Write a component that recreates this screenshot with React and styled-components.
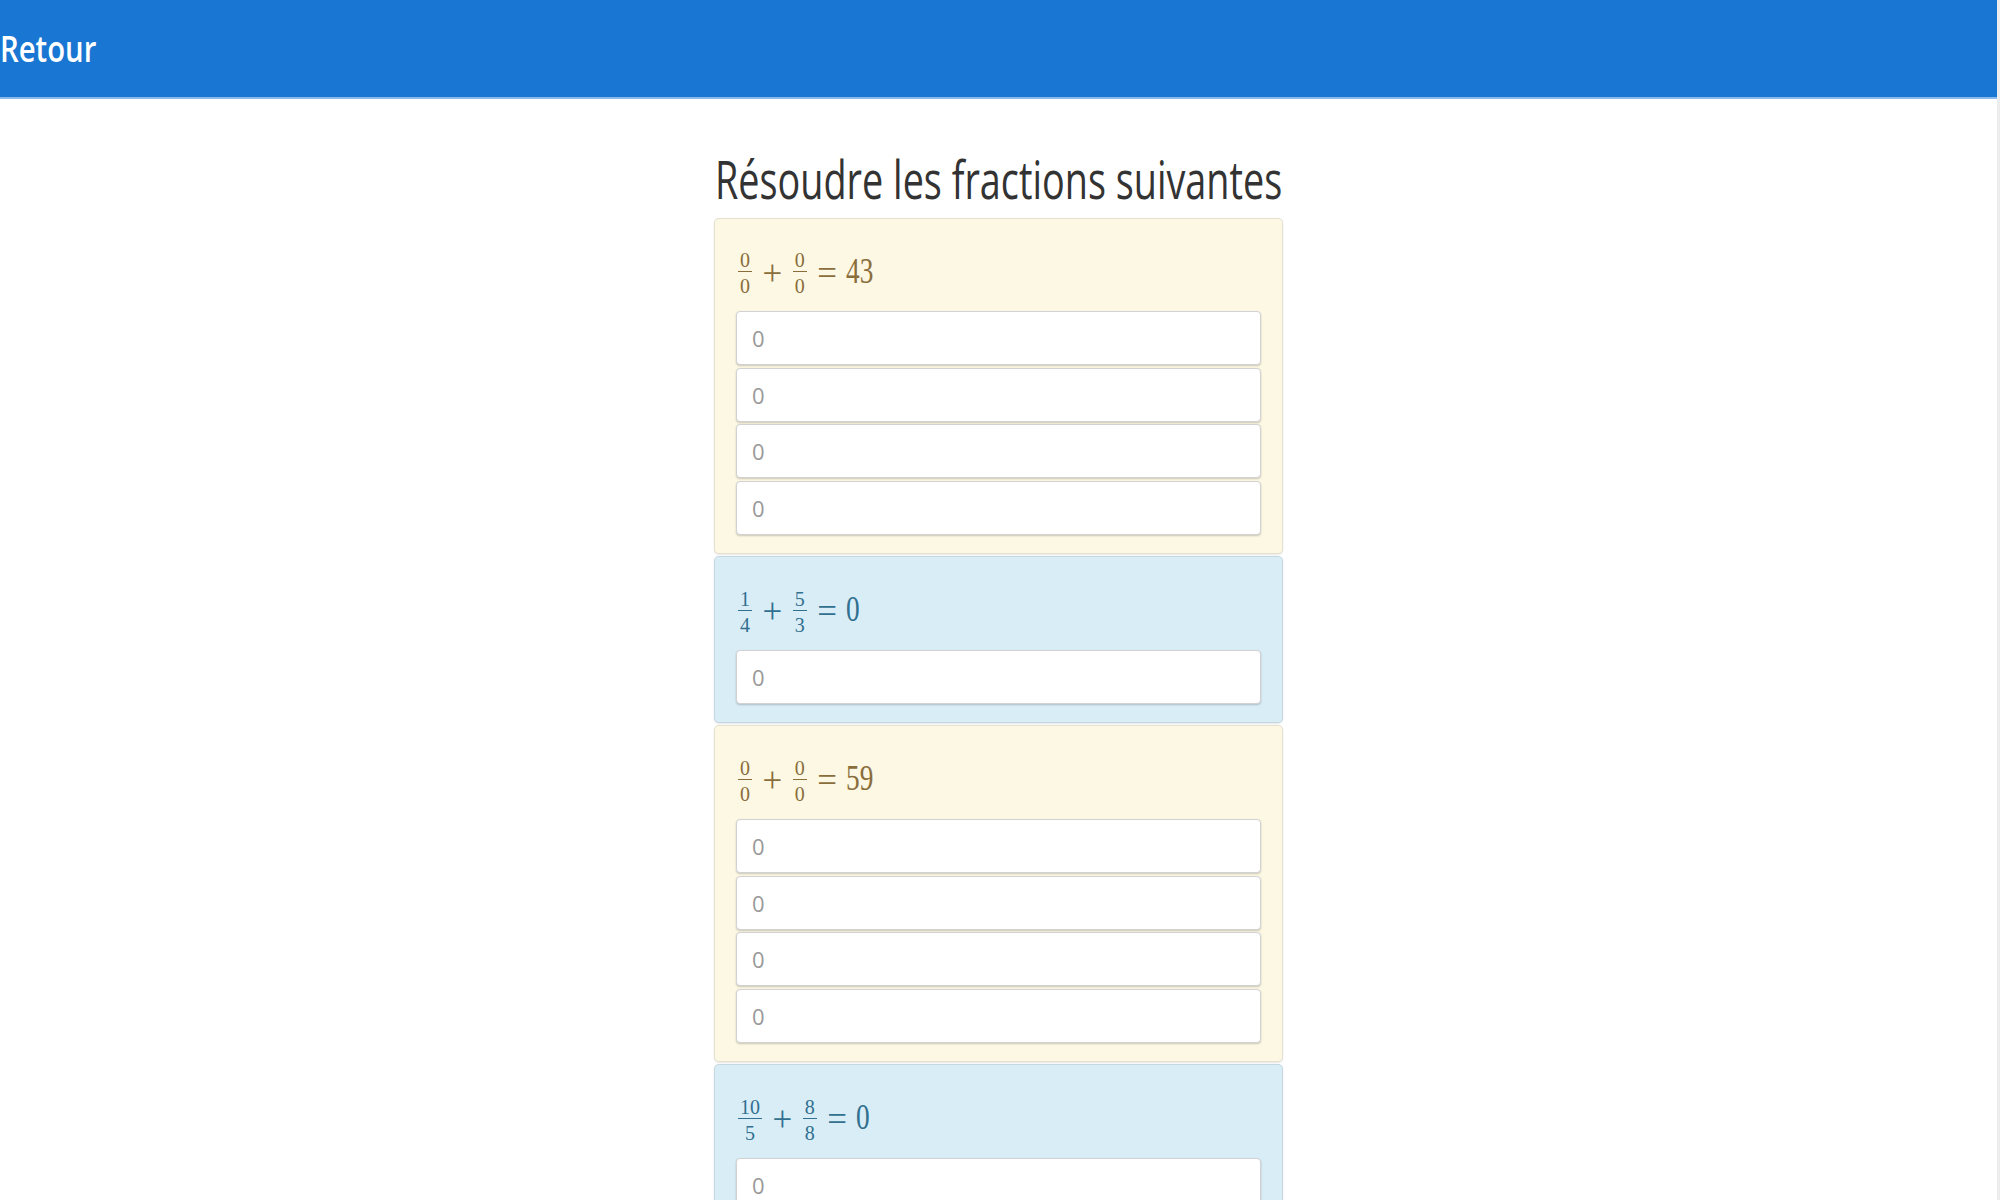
import React from "react";
import styled, { createGlobalStyle } from "styled-components";

const GlobalStyle = createGlobalStyle`
  html {
    overflow: hidden;
  }
  body {
    margin: 0;
    background: #ededed;
    font-family: "Open Sans", "Liberation Sans", sans-serif;
  }
`;

const tones = {
  warning: { bg: "#fcf8e3", text: "#8a6d3b" },
  info: { bg: "#d9edf7", text: "#31708f" },
};

const Page = styled.div`
  margin-right: 3px;
  min-height: 100vh;
  background: #fff;
`;

const Header = styled.header`
  display: flex;
  align-items: center;
  height: 97px;
  background: #1976d2;
  border-bottom: 2px solid #8bb9ea;
`;

// the screenshot is stretched vertically, hence the scaleY on big text
const BackButton = styled.button`
  padding: 0;
  border: 0;
  background: none;
  color: #fff;
  font-family: "Open Sans", "Liberation Sans", sans-serif;
  font-weight: 600;
  font-size: 29.3px;
  line-height: 29px;
  transform: scaleY(1.25);
  cursor: pointer;
`;

const Main = styled.main`
  width: 569px;
  margin: 0 auto;
`;

const Title = styled.h1`
  margin: 60px 0 18.5px 1px;
  font-weight: 400;
  font-size: 37.8px;
  line-height: 40px;
  white-space: nowrap;
  color: #333;
  transform: scaleY(1.4);
`;

const CardList = styled.div`
  display: flex;
  flex-direction: column;
  gap: 2.5px;
`;

const Card = styled.section`
  padding: 0 21px 18px;
  border: 1px solid rgba(0, 0, 0, 0.09);
  border-radius: 5px;
  background: ${(p) => tones[p.$tone].bg};
  color: ${(p) => tones[p.$tone].text};
  box-shadow: 0 1px 2px rgba(0, 0, 0, 0.1);
`;

const MathRow = styled.div`
  display: flex;
  align-items: center;
  height: 76px;
  padding-top: 16.5px;
  font-family: "Liberation Serif", "DejaVu Serif", serif;
`;

const Frac = styled.span`
  display: inline-flex;
  flex-direction: column;
  margin: 0 2px;
`;

const Part = styled.span`
  padding: 0 2px;
  font-size: 20px;
  line-height: 16px;
  text-align: center;
`;

const Bar = styled.span`
  height: 1.4px;
  margin: 2.6px 0 5.6px;
  background: currentColor;
`;

const Op = styled.span`
  margin: 0 8.5px;
  font-size: 35px;
  line-height: 35px;
`;

const Result = styled.span`
  display: inline-block;
  margin-bottom: 4px;
  font-size: 35px;
  line-height: 35px;
  transform: scaleX(0.78);
  transform-origin: left center;
`;

const Inputs = styled.div`
  display: flex;
  flex-direction: column;
  gap: 2.67px;
`;

const Answer = styled.input`
  display: block;
  box-sizing: border-box;
  width: 100%;
  height: 54px;
  padding: 0 15px;
  border: 1px solid #d2d2d2;
  border-radius: 4px;
  background: #fff;
  box-shadow: 0 1px 2px rgba(0, 0, 0, 0.2);
  font-family: "Open Sans", "Liberation Sans", sans-serif;
  font-size: 22px;
  color: #555;
  outline: none;

  &::placeholder {
    color: #999;
  }
`;

const exercises = [
  { tone: "warning", a: [0, 0], b: [0, 0], result: 43, inputs: 4 },
  { tone: "info", a: [1, 4], b: [5, 3], result: 0, inputs: 1 },
  { tone: "warning", a: [0, 0], b: [0, 0], result: 59, inputs: 4 },
  { tone: "info", a: [10, 5], b: [8, 8], result: 0, inputs: 1 },
  { tone: "warning", a: [0, 0], b: [0, 0], result: 27, inputs: 4 },
];

function Fraction({ value }) {
  return (
    <Frac>
      <Part>{value[0]}</Part>
      <Bar />
      <Part>{value[1]}</Part>
    </Frac>
  );
}

function Exercise({ item }) {
  return (
    <Card $tone={item.tone}>
      <MathRow>
        <Fraction value={item.a} />
        <Op>+</Op>
        <Fraction value={item.b} />
        <Op>=</Op>
        <Result>{item.result}</Result>
      </MathRow>
      <Inputs>
        {Array.from({ length: item.inputs }).map((_, i) => (
          <Answer key={i} type="text" placeholder="0" />
        ))}
      </Inputs>
    </Card>
  );
}

export default function App() {
  return (
    <>
      <GlobalStyle />
      <Page>
        <Header>
          <BackButton>Retour</BackButton>
        </Header>
        <Main>
          <Title>Résoudre les fractions suivantes</Title>
          <CardList>
            {exercises.map((item, i) => (
              <Exercise key={i} item={item} />
            ))}
          </CardList>
        </Main>
      </Page>
    </>
  );
}
